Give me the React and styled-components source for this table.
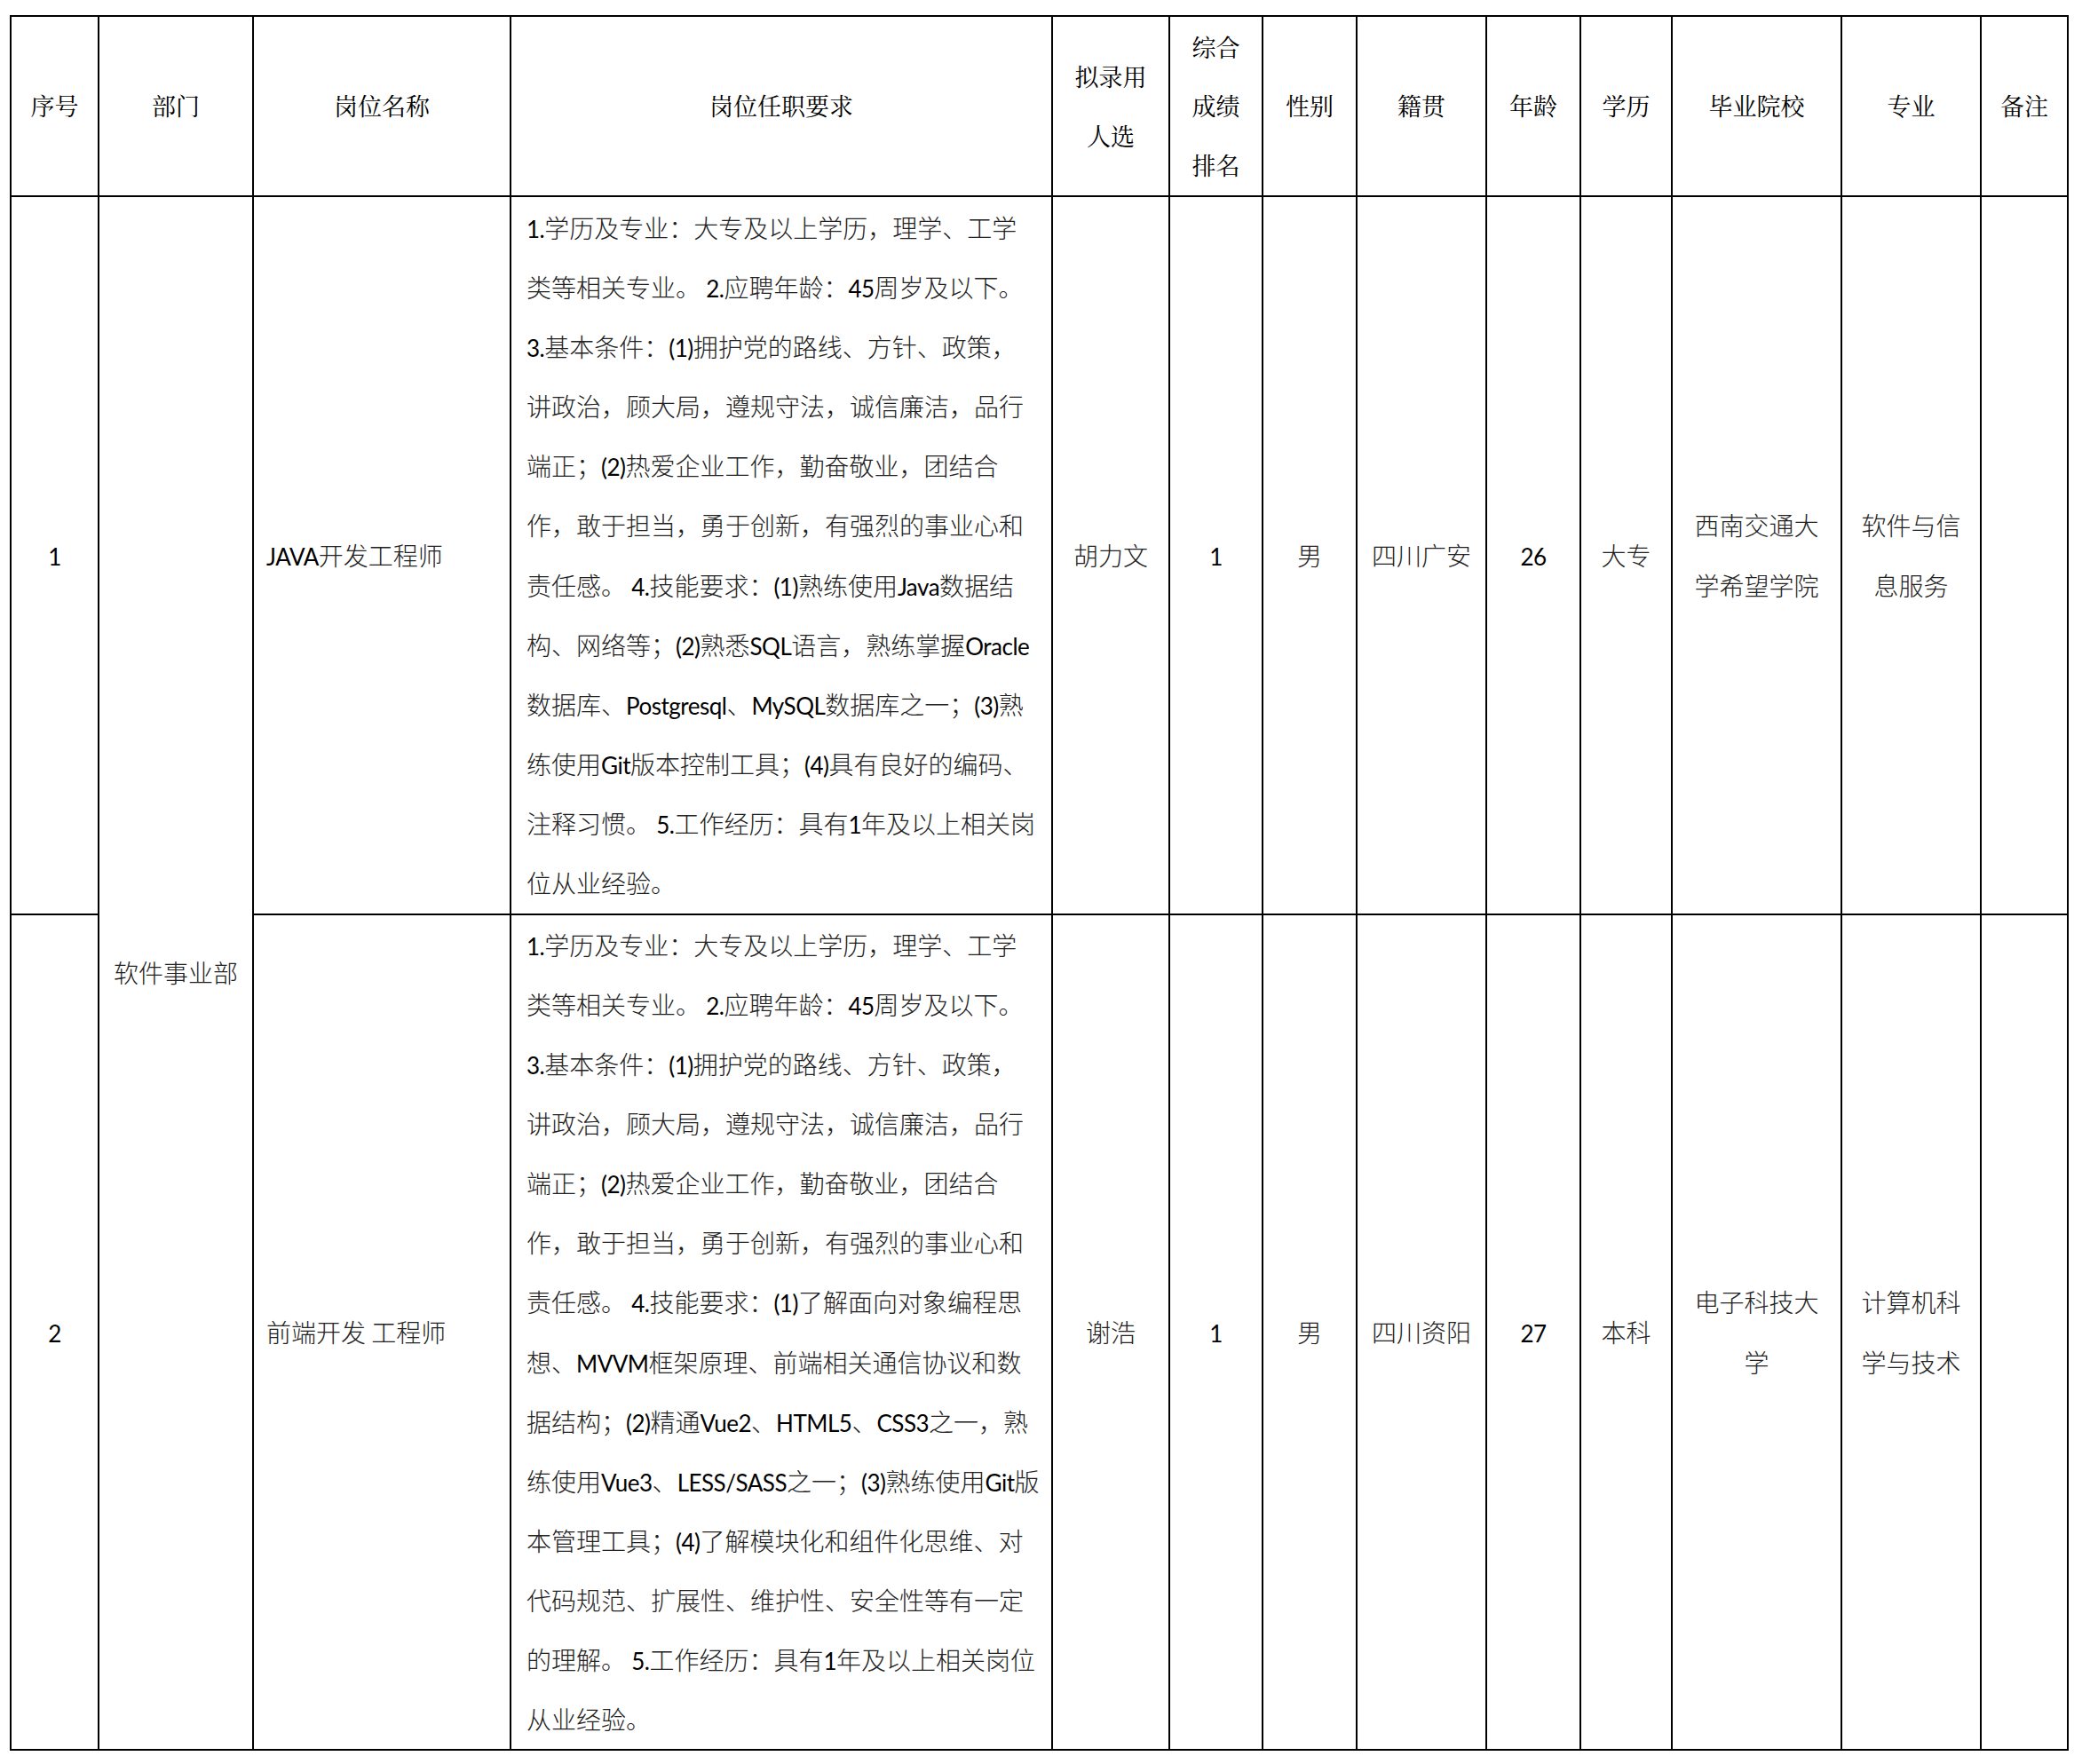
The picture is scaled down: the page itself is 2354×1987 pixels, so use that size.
import React from "react";
import styled, { createGlobalStyle } from "styled-components";

const Global = createGlobalStyle`
  html, body {
    margin: 0;
    padding: 0;
    background: #ffffff;
  }
  body {
    font-family: "Noto Sans CJK SC", sans-serif;
  }
`;

const COLS = [99, 174, 290, 610, 132, 105, 106, 146, 106, 103, 191, 157, 98];

const Sheet = styled.div`
  display: grid;
  grid-template-columns: ${COLS.map((c) => `${c}px`).join(" ")};
  grid-template-rows: 203px 809px 941px;
  width: max-content;
  margin: 17px 0 0 11px;
  border-left: 2px solid #000;
  border-top: 2px solid #000;
`;

const BaseCell = styled.div`
  box-sizing: border-box;
  border-right: 2px solid #000;
  border-bottom: 2px solid #000;
  display: flex;
  flex-direction: column;
  justify-content: center;
  align-items: ${(p) => (p.$align === "left" ? "flex-start" : "center")};
  text-align: ${(p) => (p.$align === "left" ? "left" : "center")};
  padding: 0 ${(p) => (p.$pad != null ? p.$pad : 0)}px;
  grid-row: ${(p) => (p.$rowSpan ? `span ${p.$rowSpan}` : "auto")};
`;

const HeadCell = styled(BaseCell)`
  font-family: "Noto Serif CJK SC", "Noto Sans CJK SC", serif;
  font-size: 27px;
  font-weight: 400;
  color: #000;
`;

const Cell = styled(BaseCell)`
  font-family: "Noto Sans CJK SC", sans-serif;
  font-size: 28px;
  font-weight: 300;
  color: #222;
`;

const Line = styled.span`
  display: block;
  white-space: pre;
  height: ${(p) => p.$h || 67.1}px;
  line-height: ${(p) => p.$h || 67.1}px;
`;

const Latin = styled.span`
  font-family: "Lato", "Open Sans", sans-serif;
  font-size: 26px;
  font-weight: 400;
  letter-spacing: -0.5px;
  line-height: 1;
  color: #000;
`;

const Text = ({ children }) => {
  const parts = String(children).split(/([\x20-\x7e]+)/).filter((s) => s !== "");
  return (
    <>
      {parts.map((p, i) =>
        /^[\x20-\x7e]+$/.test(p) && /[^ ]/.test(p) ? (
          <Latin key={i}>{p}</Latin>
        ) : (
          <React.Fragment key={i}>{p}</React.Fragment>
        )
      )}
    </>
  );
};

const Multi = ({ lines, h }) => (
  <>
    {lines.map((l, i) => (
      <Line key={i} $h={h}>
        <Text>{l}</Text>
      </Line>
    ))}
  </>
);

const HEADERS = [
  ["序号"],
  ["部门"],
  ["岗位名称"],
  ["岗位任职要求"],
  ["拟录用", "人选"],
  ["综合", "成绩", "排名"],
  ["性别"],
  ["籍贯"],
  ["年龄"],
  ["学历"],
  ["毕业院校"],
  ["专业"],
  ["备注"],
];

const DESC1 = [
  "1.学历及专业：大专及以上学历，理学、工学",
  "类等相关专业。 2.应聘年龄：45周岁及以下。",
  "3.基本条件：(1)拥护党的路线、方针、政策，",
  "讲政治，顾大局，遵规守法，诚信廉洁，品行",
  "端正；(2)热爱企业工作，勤奋敬业，团结合",
  "作，敢于担当，勇于创新，有强烈的事业心和",
  "责任感。 4.技能要求：(1)熟练使用Java数据结",
  "构、网络等；(2)熟悉SQL语言，熟练掌握Oracle",
  "数据库、Postgresql、MySQL数据库之一；(3)熟",
  "练使用Git版本控制工具；(4)具有良好的编码、",
  "注释习惯。 5.工作经历：具有1年及以上相关岗",
  "位从业经验。",
];

const DESC2 = [
  "1.学历及专业：大专及以上学历，理学、工学",
  "类等相关专业。 2.应聘年龄：45周岁及以下。",
  "3.基本条件：(1)拥护党的路线、方针、政策，",
  "讲政治，顾大局，遵规守法，诚信廉洁，品行",
  "端正；(2)热爱企业工作，勤奋敬业，团结合",
  "作，敢于担当，勇于创新，有强烈的事业心和",
  "责任感。 4.技能要求：(1)了解面向对象编程思",
  "想、MVVM框架原理、前端相关通信协议和数",
  "据结构；(2)精通Vue2、HTML5、CSS3之一，熟",
  "练使用Vue3、LESS/SASS之一；(3)熟练使用Git版",
  "本管理工具；(4)了解模块化和组件化思维、对",
  "代码规范、扩展性、维护性、安全性等有一定",
  "的理解。 5.工作经历：具有1年及以上相关岗位",
  "从业经验。",
];

const ROWS = [
  {
    no: "1",
    job: "JAVA开发工程师",
    desc: DESC1,
    name: "胡力文",
    rank: "1",
    sex: "男",
    origin: "四川广安",
    age: "26",
    edu: "大专",
    school: ["西南交通大", "学希望学院"],
    major: ["软件与信", "息服务"],
  },
  {
    no: "2",
    job: "前端开发 工程师",
    desc: DESC2,
    name: "谢浩",
    rank: "1",
    sex: "男",
    origin: "四川资阳",
    age: "27",
    edu: "本科",
    school: ["电子科技大", "学"],
    major: ["计算机科", "学与技术"],
  },
];

export default function App() {
  return (
    <>
      <Global />
      <Sheet>
        {HEADERS.map((h, i) => (
          <HeadCell key={`h${i}`}>
            <Multi lines={h} h={66.5} />
          </HeadCell>
        ))}
        {ROWS.map((r, idx) => (
          <React.Fragment key={r.no}>
            <Cell>
              <Multi lines={[r.no]} />
            </Cell>
            {idx === 0 && (
              <Cell $rowSpan={2}>
                <Multi lines={["软件事业部"]} />
              </Cell>
            )}
            <Cell $align="left" $pad={14}>
              <Multi lines={[r.job]} />
            </Cell>
            <Cell $align="left" $pad={17}>
              <Multi lines={r.desc} />
            </Cell>
            <Cell>
              <Multi lines={[r.name]} />
            </Cell>
            <Cell>
              <Multi lines={[r.rank]} />
            </Cell>
            <Cell>
              <Multi lines={[r.sex]} />
            </Cell>
            <Cell>
              <Multi lines={[r.origin]} />
            </Cell>
            <Cell>
              <Multi lines={[r.age]} />
            </Cell>
            <Cell>
              <Multi lines={[r.edu]} />
            </Cell>
            <Cell>
              <Multi lines={r.school} />
            </Cell>
            <Cell>
              <Multi lines={r.major} />
            </Cell>
            <Cell />
          </React.Fragment>
        ))}
      </Sheet>
    </>
  );
}
